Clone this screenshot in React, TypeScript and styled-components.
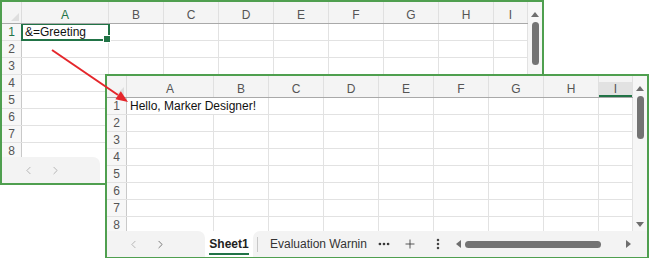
import styled, { createGlobalStyle } from 'styled-components';
import { ChevronLeft, ChevronRight, Ellipsis, EllipsisVertical, Plus } from 'lucide-react';

const GREEN = '#217346';

const GlobalStyle = createGlobalStyle`
  * { box-sizing: border-box; }
  html, body { margin: 0; padding: 0; background: #fff; }
  body { font-family: 'Liberation Sans', Arial, sans-serif; }
`;

const COLUMNS = [
  { name: 'A', w: 87 },
  { name: 'B', w: 55 },
  { name: 'C', w: 55 },
  { name: 'D', w: 55 },
  { name: 'E', w: 55 },
  { name: 'F', w: 55 },
  { name: 'G', w: 55 },
  { name: 'H', w: 55 },
  { name: 'I', w: 34 },
];
const ROWS = [1, 2, 3, 4, 5, 6, 7, 8];

type WindowProps = {
  left: number;
  top: number;
  text: string;
  selected?: boolean;
  spill?: boolean;
  hoverCol?: string;
  showDown?: boolean;
  // the back window has its tab strip hidden behind the front one
  covered?: boolean;
};

const SheetWindow = ({ left, top, text, selected, spill, hoverCol, showDown, covered }: WindowProps) => (
  <Frame $left={left} $top={top}>
    <Main>
      <Sheet>
        <HeaderRow>
          <Corner />
          {COLUMNS.map((c) => (
            <ColHeader
              key={c.name}
              $w={c.w}
              $active={selected && c.name === 'A'}
              $hover={hoverCol === c.name}
            >
              {c.name}
            </ColHeader>
          ))}
        </HeaderRow>
        <Body>
          {ROWS.map((r) => (
            <Row key={r}>
              <RowHeader $active={selected && r === 1}>{r}</RowHeader>
              {r === 1 ? (
                <>
                  <Cell $w={spill ? COLUMNS[0].w + COLUMNS[1].w : COLUMNS[0].w} $selected={selected}>
                    {text}
                  </Cell>
                  {COLUMNS.slice(spill ? 2 : 1).map((c) => (
                    <Cell key={c.name} $w={c.w} />
                  ))}
                </>
              ) : (
                COLUMNS.map((c) => <Cell key={c.name} $w={c.w} />)
              )}
            </Row>
          ))}
        </Body>
      </Sheet>
      <VScroll>
        <ArrowUp />
        <VThumb />
        <Spacer />
        {showDown && <ArrowDown />}
      </VScroll>
    </Main>
    <TabBar>
      <Nav>
        <ChevronLeft size={13} strokeWidth={1.4} color="#a3a3a3" />
        <ChevronRight size={13} strokeWidth={1.4} color={covered ? '#a3a3a3' : '#555'} />
      </Nav>
      {!covered && (
        <>
          <ActiveTab>
            <TabLabel>Sheet1</TabLabel>
          </ActiveTab>
          <TabRest>
            <Divider />
            <TabText>Evaluation Warnin</TabText>
            <IconSlot $ml={10}>
              <Ellipsis size={14} strokeWidth={2.6} color="#333" />
            </IconSlot>
            <IconSlot $ml={12}>
              <Plus size={14} strokeWidth={1.4} color="#333" />
            </IconSlot>
            <IconSlot $ml={14}>
              <EllipsisVertical size={14} strokeWidth={2.4} color="#444" />
            </IconSlot>
            <HScroll>
              <ArrowLeft />
              <HThumb />
              <Spacer />
              <ArrowRight />
            </HScroll>
          </TabRest>
        </>
      )}
    </TabBar>
  </Frame>
);

const App = () => (
  <>
    <GlobalStyle />
    <Desktop>
      <SheetWindow left={0} top={0} text="&=Greeting" selected covered />
      <SheetWindow left={105} top={74} text="Hello, Marker Designer!" spill hoverCol="I" showDown />
      <Pointer width={650} height={258} viewBox="0 0 650 258">
        <line x1={52} y1={50} x2={118} y2={95} stroke="#e5262b" strokeWidth={2} />
        <polygon points="128,102 115.4,99.2 120.8,91.2" fill="#e5262b" />
      </Pointer>
    </Desktop>
  </>
);

const Desktop = styled.div`
  position: relative;
  width: 650px;
  height: 258px;
  overflow: hidden;
  background: #fff;
`;

const Frame = styled.div<{ $left: number; $top: number }>`
  position: absolute;
  left: ${(p) => p.$left}px;
  top: ${(p) => p.$top}px;
  width: 544px;
  height: 185px;
  border: 2px solid #4f9f4f;
  background: #fff;
  display: flex;
  flex-direction: column;
  overflow: hidden;
`;

const Main = styled.div`
  flex: 1;
  display: flex;
  min-height: 0;
`;

const Sheet = styled.div`
  width: 526px;
  display: flex;
  flex-direction: column;
  overflow: hidden;
`;

const HeaderRow = styled.div`
  display: flex;
  height: 22px;
  flex-shrink: 0;
  background: #f4f4f4;
  border-bottom: 1px solid #a9a9a9;
`;

const Corner = styled.div`
  position: relative;
  width: 20px;
  flex-shrink: 0;
  border-right: 1px solid #dcdcdc;

  &::after {
    content: '';
    position: absolute;
    right: 2px;
    bottom: 2px;
    border-left: 8px solid transparent;
    border-bottom: 8px solid #dedede;
  }
`;

const ColHeader = styled.div<{ $w: number; $active?: boolean; $hover?: boolean }>`
  width: ${(p) => p.$w}px;
  flex-shrink: 0;
  display: flex;
  align-items: center;
  justify-content: center;
  padding-top: 4px;
  font-size: 12px;
  color: ${(p) => (p.$active ? GREEN : '#555')};
  border-right: 1px solid #e0e0e0;
  background: ${(p) => (p.$hover ? 'linear-gradient(to bottom, #f4f4f4 6px, #e2e2e2 6px)' : 'transparent')};
  box-shadow: ${(p) => (p.$hover ? `inset 0 -2px 0 ${GREEN}` : 'none')};
`;

const Body = styled.div`
  flex: 1;
  overflow: hidden;
`;

const Row = styled.div`
  display: flex;
  height: 17px;
  border-bottom: 1px solid #e2e2e2;
`;

const RowHeader = styled.div<{ $active?: boolean }>`
  width: 20px;
  flex-shrink: 0;
  display: flex;
  align-items: center;
  justify-content: center;
  font-size: 12px;
  color: ${(p) => (p.$active ? GREEN : '#555')};
  background: #f7f7f7;
  border-right: 1px solid #c9c9c9;
`;

const Cell = styled.div<{ $w: number; $selected?: boolean }>`
  position: relative;
  width: ${(p) => p.$w}px;
  flex-shrink: 0;
  padding: 0 3px;
  display: flex;
  align-items: center;
  font-size: 12px;
  color: #111;
  white-space: nowrap;
  border-right: 1px solid #e2e2e2;
  outline: ${(p) => (p.$selected ? `2px solid ${GREEN}` : 'none')};
  outline-offset: -1px;
  z-index: ${(p) => (p.$selected ? 1 : 0)};

  &::after {
    content: '';
    display: ${(p) => (p.$selected ? 'block' : 'none')};
    position: absolute;
    right: -3px;
    bottom: -3px;
    width: 6px;
    height: 6px;
    background: ${GREEN};
    border: 1px solid #fff;
  }
`;

const VScroll = styled.div`
  width: 14px;
  flex-shrink: 0;
  background: #f6f6f6;
  display: flex;
  flex-direction: column;
  align-items: center;
  padding: 10px 0 4px;
`;

const ArrowUp = styled.div`
  border-left: 4px solid transparent;
  border-right: 4px solid transparent;
  border-bottom: 5px solid #6e6e6e;
`;

const ArrowDown = styled.div`
  border-left: 4px solid transparent;
  border-right: 4px solid transparent;
  border-top: 5px solid #6e6e6e;
`;

const VThumb = styled.div`
  margin-top: 5px;
  width: 7px;
  height: 43px;
  border-radius: 4px;
  background: #737373;
`;

const Spacer = styled.div`
  flex: 1;
`;

const TabBar = styled.div`
  height: 26px;
  flex-shrink: 0;
  display: flex;
  background: #fff;
`;

const Nav = styled.div`
  width: 98px;
  flex-shrink: 0;
  display: flex;
  align-items: center;
  gap: 14px;
  padding-left: 20px;
  background: #f3f3f3;
  border-top-right-radius: 7px;
`;

const ActiveTab = styled.div`
  width: 48px;
  flex-shrink: 0;
  display: flex;
  justify-content: center;
  align-items: center;
`;

const TabLabel = styled.span`
  font-size: 12px;
  font-weight: bold;
  color: #222;
  padding: 3px 0 2px;
  border-bottom: 2px solid ${GREEN};
`;

const TabRest = styled.div`
  flex: 1;
  display: flex;
  align-items: center;
  padding: 0 16px 0 4px;
  background: #f3f3f3;
  border-top-left-radius: 7px;
`;

const Divider = styled.div`
  width: 1px;
  height: 15px;
  background: #c8c8c8;
`;

const TabText = styled.span`
  margin-left: 12px;
  font-size: 12px;
  color: #333;
  white-space: nowrap;
`;

const IconSlot = styled.span<{ $ml: number }>`
  display: flex;
  margin-left: ${(p) => p.$ml}px;
`;

const HScroll = styled.div`
  flex: 1;
  display: flex;
  align-items: center;
  margin-left: 11px;
`;

const ArrowLeft = styled.div`
  border-top: 4px solid transparent;
  border-bottom: 4px solid transparent;
  border-right: 5px solid #6e6e6e;
`;

const ArrowRight = styled.div`
  border-top: 4px solid transparent;
  border-bottom: 4px solid transparent;
  border-left: 5px solid #6e6e6e;
`;

const HThumb = styled.div`
  margin-left: 4px;
  width: 136px;
  height: 7px;
  border-radius: 4px;
  background: #737373;
`;

const Pointer = styled.svg`
  position: absolute;
  left: 0;
  top: 0;
  pointer-events: none;
`;

export default App;
